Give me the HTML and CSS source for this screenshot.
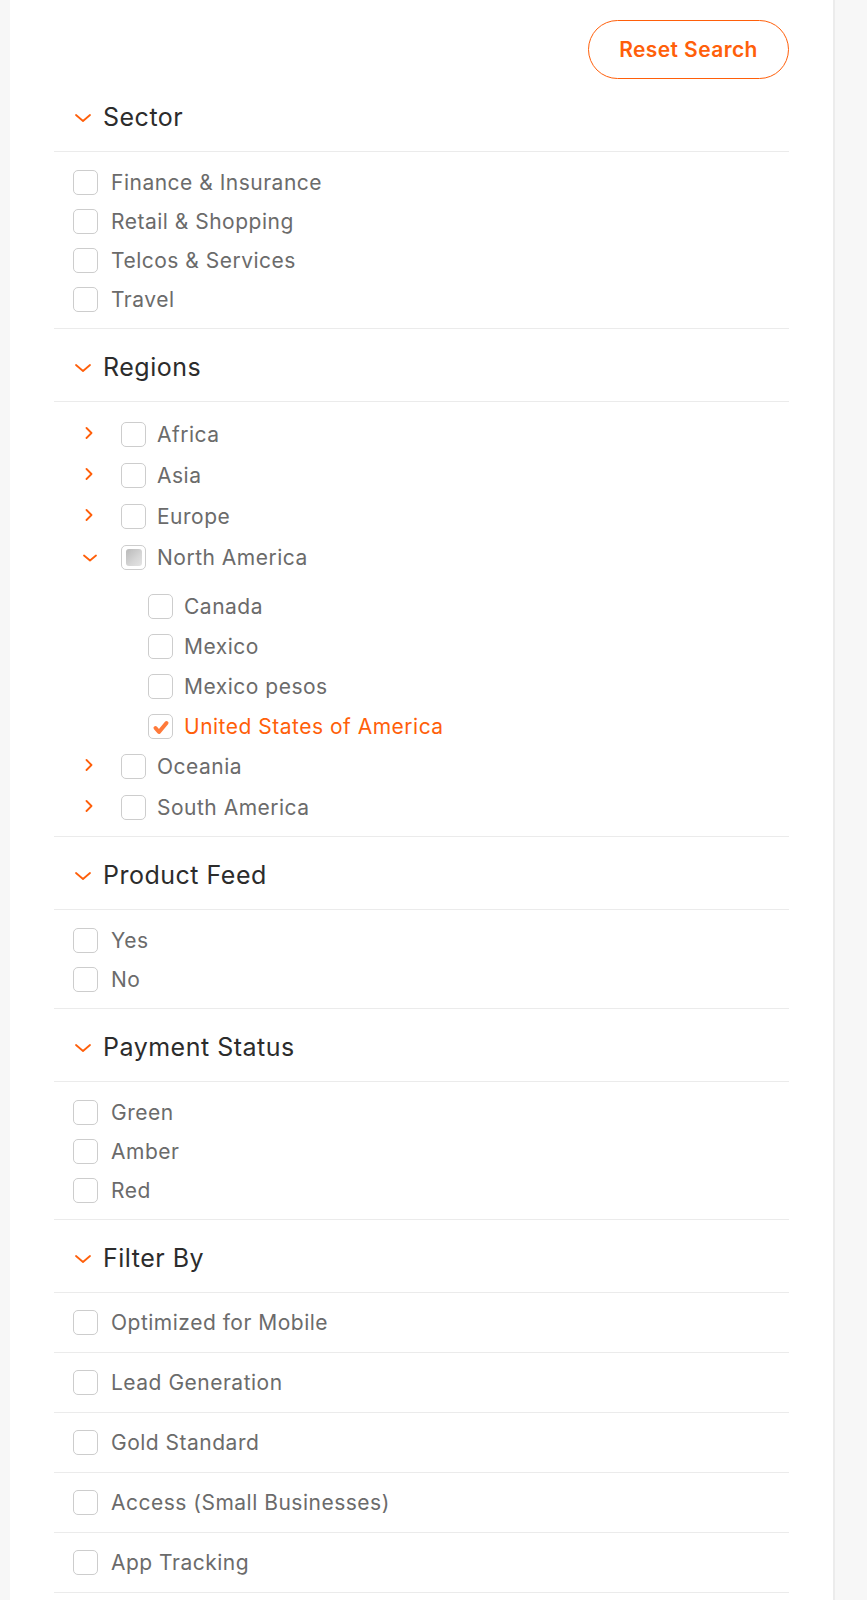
FILE: index.html
```html
<!DOCTYPE html>
<html lang="en">
<head>
<meta charset="utf-8">
<title>Filters</title>
<link rel="stylesheet" href="styles.css">
</head>
<body>
<div class="panel">
  <div class="toolbar">
    <button class="reset">Reset Search</button>
  </div>

  <section class="group">
    <div class="group-head">
      <svg class="chev-down" viewBox="0 0 16 8"><path d="M1 1l7 6 7-6"/></svg>
      <span>Sector</span>
    </div>
    <ul class="list">
      <li class="item"><span class="box"></span><span>Finance &amp; Insurance</span></li>
      <li class="item"><span class="box"></span><span>Retail &amp; Shopping</span></li>
      <li class="item"><span class="box"></span><span>Telcos &amp; Services</span></li>
      <li class="item"><span class="box"></span><span>Travel</span></li>
    </ul>
  </section>

  <section class="group">
    <div class="group-head">
      <svg class="chev-down" viewBox="0 0 16 8"><path d="M1 1l7 6 7-6"/></svg>
      <span>Regions</span>
    </div>
    <ul class="list tree">
      <li class="node"><svg class="chev-r" viewBox="0 0 8 12"><path d="M1.5 1l5 5-5 5"/></svg><span class="box"></span><span>Africa</span></li>
      <li class="node"><svg class="chev-r" viewBox="0 0 8 12"><path d="M1.5 1l5 5-5 5"/></svg><span class="box"></span><span>Asia</span></li>
      <li class="node"><svg class="chev-r" viewBox="0 0 8 12"><path d="M1.5 1l5 5-5 5"/></svg><span class="box"></span><span>Europe</span></li>
      <li class="node"><svg class="chev-d" viewBox="0 0 14 8"><path d="M1 1.5l6 5 6-5"/></svg><span class="box partial"></span><span>North America</span></li>
      <li class="sub">
        <ul class="sublist">
          <li class="subitem"><span class="box"></span><span>Canada</span></li>
          <li class="subitem"><span class="box"></span><span>Mexico</span></li>
          <li class="subitem"><span class="box"></span><span>Mexico pesos</span></li>
          <li class="subitem checked"><span class="box"><svg class="tick" viewBox="0 0 20 20"><path d="M4.5 11l3.5 4 7.5-9"/></svg></span><span>United States of America</span></li>
        </ul>
      </li>
      <li class="node"><svg class="chev-r" viewBox="0 0 8 12"><path d="M1.5 1l5 5-5 5"/></svg><span class="box"></span><span>Oceania</span></li>
      <li class="node"><svg class="chev-r" viewBox="0 0 8 12"><path d="M1.5 1l5 5-5 5"/></svg><span class="box"></span><span>South America</span></li>
    </ul>
  </section>

  <section class="group">
    <div class="group-head">
      <svg class="chev-down" viewBox="0 0 16 8"><path d="M1 1l7 6 7-6"/></svg>
      <span>Product Feed</span>
    </div>
    <ul class="list">
      <li class="item"><span class="box"></span><span>Yes</span></li>
      <li class="item"><span class="box"></span><span>No</span></li>
    </ul>
  </section>

  <section class="group">
    <div class="group-head">
      <svg class="chev-down" viewBox="0 0 16 8"><path d="M1 1l7 6 7-6"/></svg>
      <span>Payment Status</span>
    </div>
    <ul class="list">
      <li class="item"><span class="box"></span><span>Green</span></li>
      <li class="item"><span class="box"></span><span>Amber</span></li>
      <li class="item"><span class="box"></span><span>Red</span></li>
    </ul>
  </section>

  <section class="group">
    <div class="group-head">
      <svg class="chev-down" viewBox="0 0 16 8"><path d="M1 1l7 6 7-6"/></svg>
      <span>Filter By</span>
    </div>
    <ul class="rows">
      <li class="row"><span class="box"></span><span>Optimized for Mobile</span></li>
      <li class="row"><span class="box"></span><span>Lead Generation</span></li>
      <li class="row"><span class="box"></span><span>Gold Standard</span></li>
      <li class="row"><span class="box"></span><span>Access (Small Businesses)</span></li>
      <li class="row"><span class="box"></span><span>App Tracking</span></li>
    </ul>
  </section>
</div>
</body>
</html>
```
FILE: styles.css
```css
* { box-sizing: border-box; }

html, body {
  margin: 0;
  padding: 0;
  background: #f7f7f7;
  font-family: Inter, "Noto Sans", "Liberation Sans", sans-serif;
}

.panel {
  margin-left: 10px;
  width: 825px;
  min-height: 1600px;
  background: #ffffff;
  border-right: 2px solid #ececec;
  padding: 20px 44px 0 44px;
}

.toolbar {
  display: flex;
  justify-content: flex-end;
}

.reset {
  width: 201px;
  height: 59px;
  border: 1.5px solid #ff5f0a;
  border-radius: 30px;
  background: #fff;
  color: #ff5f0a;
  font-family: Inter, "Noto Sans", sans-serif;
  font-size: 21px;
  font-weight: 600;
  letter-spacing: 0.4px;
  padding: 0;
}

ul { list-style: none; margin: 0; padding: 0; }

.group-head {
  height: 73px;
  padding-top: 4px;
  display: flex;
  align-items: center;
  gap: 12px;
  padding-left: 21px;
  border-bottom: 1px solid #ebebeb;
  font-size: 25px;
  color: #2c2c2c;
  letter-spacing: 0.5px;
}

.chev-down {
  width: 16px;
  height: 8px;
  flex: none;
  fill: none;
  stroke: #ff5f0a;
  stroke-width: 1.8;
  stroke-linecap: round;
  stroke-linejoin: round;
  margin-top: 1px;
}

.list {
  padding: 11px 0 9px 0;
  border-bottom: 1px solid #ebebeb;
}

.item {
  height: 39px;
  display: flex;
  align-items: center;
  gap: 13px;
  padding-left: 19px;
  font-size: 21px;
  letter-spacing: 0.5px;
  color: #6b6b6b;
}

.box {
  width: 25px;
  height: 25px;
  flex: none;
  border: 1.5px solid #cdcdcd;
  border-radius: 5px;
  background: #fff;
  position: relative;
  display: flex;
  align-items: center;
  justify-content: center;
}

.box.partial::after {
  content: "";
  width: 16px;
  height: 17px;
  border-radius: 3px;
  background: linear-gradient(135deg, #b9b9b9 0%, #d6d6d6 60%, #e4e4e4 100%);
}

.tick {
  width: 20px;
  height: 20px;
  fill: none;
  stroke: #ff7a3a;
  stroke-width: 4;
  stroke-linecap: round;
  stroke-linejoin: round;
  margin-top: 2px;
}

.tree {
  padding: 12px 0 8px 0;
}

.node {
  height: 41px;
  display: flex;
  align-items: center;
  padding-left: 29px;
  font-size: 21px;
  letter-spacing: 0.5px;
  color: #6b6b6b;
}

.node .box { margin-right: 11px; }

.chev-r {
  width: 8px;
  height: 12px;
  flex: none;
  fill: none;
  stroke: #ff5f0a;
  stroke-width: 1.8;
  stroke-linecap: round;
  stroke-linejoin: round;
  margin-left: 2px;
  margin-right: 28px;
  margin-top: -4px;
}

.chev-d {
  width: 14px;
  height: 8px;
  flex: none;
  fill: none;
  stroke: #ff5f0a;
  stroke-width: 1.8;
  stroke-linecap: round;
  stroke-linejoin: round;
  margin-right: 24px;
  margin-top: 0px;
}

.sublist {
  padding: 8px 0 0 0;
}

.subitem {
  height: 40px;
  display: flex;
  align-items: center;
  gap: 11px;
  padding-left: 94px;
  font-size: 21px;
  letter-spacing: 0.5px;
  color: #6b6b6b;
}

.subitem.checked { color: #ff5f0a; }

.rows .row {
  height: 60px;
  display: flex;
  align-items: center;
  gap: 13px;
  padding-left: 19px;
  font-size: 21px;
  letter-spacing: 0.5px;
  color: #6b6b6b;
  border-bottom: 1px solid #ebebeb;
}
```
